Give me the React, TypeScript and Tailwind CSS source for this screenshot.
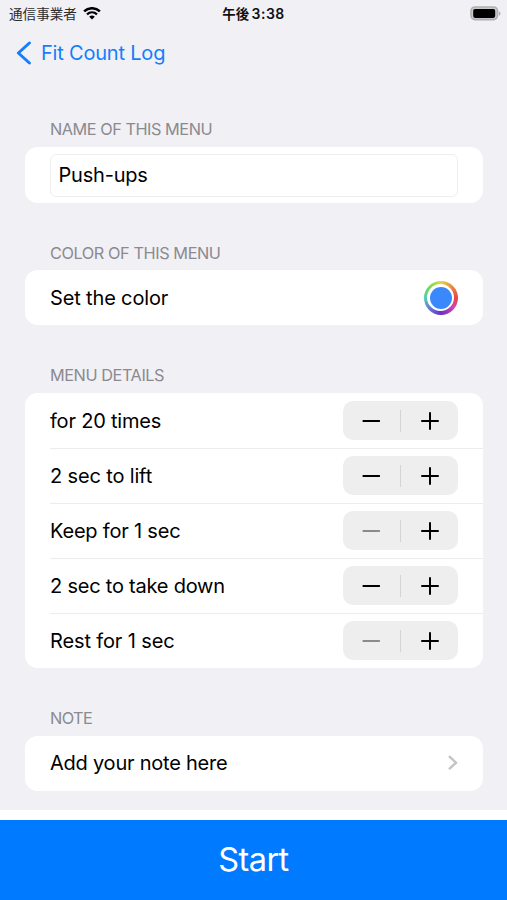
import type { ReactNode } from "react";

function SectionTitle({ children, className }: { children: ReactNode; className: string }) {
  return (
    <h2 className={`ml-[50px] h-5 whitespace-nowrap text-[16.3px] leading-5 font-normal text-[#8a8a8f] ${className}`}>
      {children}
    </h2>
  );
}

function Card({ children, className }: { children: ReactNode; className: string }) {
  return <section className={`mx-[25px] mr-[24.5px] overflow-hidden rounded-[12.5px] bg-white ${className}`}>{children}</section>;
}

function Stepper({ minusDisabled }: { minusDisabled: boolean }) {
  return (
    <div className="flex h-[39px] w-[115px] items-center rounded-[10px] bg-[#eeeeef]">
      <button className="flex h-full w-[57px] items-center justify-center" aria-label="Decrement" disabled={minusDisabled}>
        <svg width="18" height="18" viewBox="0 0 18 18" className={minusDisabled ? "text-[#8b8b8d]" : "text-black"}>
          <path d="M1.4 9H17.4" stroke="currentColor" strokeWidth="2" strokeLinecap="round" />
        </svg>
      </button>
      <div className="h-[22px] w-px bg-[#d4d4d6]" />
      <button className="flex h-full w-[57px] items-center justify-center" aria-label="Increment">
        <svg width="19" height="18" viewBox="0 0 19 18" className="text-black">
          <path d="M2 9H18M10 1V17" stroke="currentColor" strokeWidth="2" strokeLinecap="round" />
        </svg>
      </button>
    </div>
  );
}

const details = [
  { label: "for 20 times", tracking: "tracking-[-0.2px]", minusDisabled: false },
  { label: "2 sec to lift", tracking: "tracking-[-0.15px]", minusDisabled: false },
  { label: "Keep for 1 sec", tracking: "tracking-[-0.2px]", minusDisabled: true },
  { label: "2 sec to take down", tracking: "tracking-[-0.22px]", minusDisabled: false },
  { label: "Rest for 1 sec", tracking: "tracking-[-0.13px]", minusDisabled: true },
];

export default function App() {
  return (
    <div className="flex h-[900px] w-[507px] flex-col overflow-hidden bg-[#f1f0f5] font-['Inter','Noto_Sans_CJK_JP',sans-serif] text-[20px] text-black">
      <header className="grid h-[27px] shrink-0 grid-cols-3 items-center">
        <div className="flex items-center gap-[6px] pl-[9px]">
          <span className="text-[13.6px] leading-5 text-[#2c2c2e]">通信事業者</span>
          <svg width="18" height="13" viewBox="0 0 18 13" fill="none" stroke="black">
            <path d="M1.1 4.3C5.6 .2 12.4 .2 16.9 4.3" strokeWidth="2.5" />
            <path d="M4 7.4C6.9 4.8 11.1 4.8 14 7.4" strokeWidth="2.3" />
            <path d="M6.2 9.8Q9 7.4 11.8 9.8L9 12.6Z" fill="black" stroke="none" />
          </svg>
        </div>
        <div className="flex items-center justify-center gap-[2.5px] text-[13.4px] leading-5 font-semibold text-[#111112]">
          <span>午後</span>
          <span className="text-[14px] tracking-[0.45px]">3:38</span>
        </div>
        <div className="flex justify-end pr-[6px]">
          <svg width="31" height="15" viewBox="0 0 31 15">
            <rect x="1" y="1" width="26.5" height="12.6" rx="4" fill="#c9c9cc" stroke="#b0b0b3" strokeWidth="1.6" />
            <rect x="3.2" y="2.9" width="22" height="9" rx="1.8" fill="black" />
            <path d="M28.8 5.2C31 6 31 9 28.8 9.8Z" fill="#b0b0b3" />
          </svg>
        </div>
      </header>

      <nav className="flex h-[52px] shrink-0 items-center gap-[9px] pl-4 text-[#147efb]">
        <svg width="16" height="24" viewBox="0 0 16 24" fill="none">
          <path d="M13.4 2L2.4 12L13.4 22" stroke="currentColor" strokeWidth="3" strokeLinecap="round" strokeLinejoin="round" />
        </svg>
        <span className="whitespace-nowrap tracking-[-0.2px]">Fit Count Log</span>
      </nav>

      <main className="h-[730.5px] shrink-0">
        <SectionTitle className="mt-[40px] tracking-[-0.47px]">NAME OF THIS MENU</SectionTitle>
        <Card className="mt-[8px] h-[56px] px-[25px] py-[6.5px]">
          <div className="flex h-[43px] items-center rounded-[6px] border border-[#eeeeef] px-[7.5px] tracking-[-0.2px]">Push-ups</div>
        </Card>
        <SectionTitle className="mt-[39.5px] tracking-[-0.42px]">COLOR OF THIS MENU</SectionTitle>
        <Card className="mt-[7.5px] flex h-[55px] items-center justify-between px-[25px]">
          <span className="tracking-[-0.15px]">Set the color</span>
          <div className="flex size-[34px] items-center justify-center rounded-full bg-[conic-gradient(#e0d650,#eb8a3e_12%,#e84646_25%,#cf45b0_35%,#6b2fc6_50%,#6970d9_62%,#4dcfb8_75%,#70dc50_87%,#e0d650)]">
            <div className="flex size-[27px] items-center justify-center rounded-full bg-white">
              <div className="size-[22px] rounded-full bg-[#3a88fb]" />
            </div>
          </div>
        </Card>
        <SectionTitle className="mt-[39.5px] tracking-[-0.44px]">MENU DETAILS</SectionTitle>
        <Card className="mt-[8.5px] h-[275px]">
          {details.map((item, index) => (
            <div key={item.label} className={`ml-[25px] flex h-[55px] items-center justify-between pr-[25px] ${index > 0 ? "shadow-[inset_0_1px_0_#ececee]" : ""}`}>
              <span className={item.tracking}>{item.label}</span>
              <Stepper minusDisabled={item.minusDisabled} />
            </div>
          ))}
        </Card>
        <SectionTitle className="mt-[39.5px] tracking-[-0.6px]">NOTE</SectionTitle>
        <Card className="mt-[8px] flex h-[55px] items-center justify-between px-[25px]">
          <span className="tracking-[-0.23px]">Add your note here</span>
          <svg width="10" height="16" viewBox="0 0 10 16" fill="none">
            <path d="M1 1.2L8 7.7L1 14.2" stroke="#c4c4c7" strokeWidth="2.4" />
          </svg>
        </Card>
      </main>
      <footer className="flex-1 border-t-[10.5px] border-white bg-[#007aff]">
        <button className="flex h-[81px] w-full items-center justify-center text-[32.5px] font-normal tracking-[-0.6px] text-white">Start</button>
      </footer>
    </div>
  );
}
